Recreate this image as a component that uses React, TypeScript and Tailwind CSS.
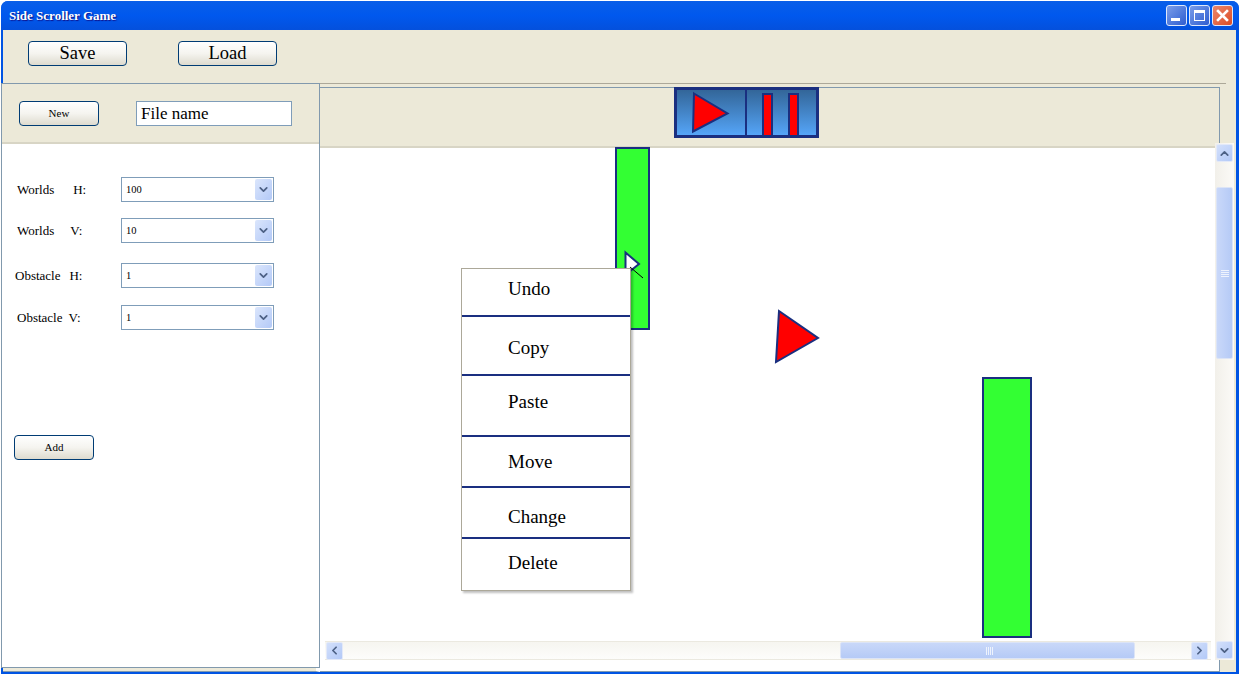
import { ChevronDown, ChevronLeft, ChevronRight, ChevronUp } from "lucide-react";

const serif = "font-['Liberation_Serif',serif]";
const xpButton =
  "flex items-center justify-center rounded-[4px] border border-[#003c74] bg-gradient-to-b from-white via-[#f5f4ef] to-[#dedbcf] text-black";

function WindowButton({ kind }: { kind: "min" | "max" | "close" }) {
  const tone =
    kind === "close"
      ? "from-[#e9876b] to-[#dd4a20]"
      : "from-[#7b9de9] to-[#2f5cd0]";
  return (
    <div
      className={`relative h-[21px] w-[21px] rounded-[3px] border border-[#dfe8fb] bg-gradient-to-br ${tone}`}
    >
      <svg className="absolute inset-0" width="19" height="19" viewBox="0 0 19 19">
        {kind === "min" && <rect x="4" y="12" width="9" height="3" fill="white" />}
        {kind === "max" && (
          <path d="M4 4h11v11H4z M5 7v7h9V7z" fill="white" fillRule="evenodd" />
        )}
        {kind === "close" && (
          <path d="M5 5l9 9M14 5l-9 9" stroke="white" strokeWidth="2.6" strokeLinecap="square" />
        )}
      </svg>
    </div>
  );
}

function ScrollArrow({ children }: { children: React.ReactNode }) {
  return (
    <div className="flex h-[18px] w-[17px] shrink-0 items-center justify-center rounded-[2px] border border-[#e3e9f8] bg-gradient-to-br from-[#d3e0fb] to-[#b3c9f7] text-[#4d6185]">
      {children}
    </div>
  );
}

function SelectRow({
  label,
  axis,
  axisGap,
  labelLeft,
  value,
}: {
  label: string;
  axis: string;
  axisGap: string;
  labelLeft: string;
  value: string;
}) {
  return (
    <div className="flex h-[25px] items-center">
      <div className={`flex w-[119px] shrink-0 text-[13px] leading-none text-black ${labelLeft}`}>
        <span>{label}</span>
        <span className={axisGap}>{axis}</span>
      </div>
      <div className="flex h-[25px] w-[153px] items-center justify-between border border-[#7f9db9] bg-white pl-[4px] pr-[1px] text-[10.5px]">
        <span>{value}</span>
        <div className="flex h-[21px] w-[17px] items-center justify-center rounded-[2px] bg-gradient-to-br from-[#dbe6fc] to-[#b3c9f7] text-[#4d6185]">
          <ChevronDown size={13} strokeWidth={3.2} />
        </div>
      </div>
    </div>
  );
}

const menuItems = [
  { label: "Undo", height: "h-[48px]", text: "pb-[5px]" },
  { label: "Copy", height: "h-[59px]", text: "pt-[6px]" },
  { label: "Paste", height: "h-[61px]", text: "pb-[7px]" },
  { label: "Move", height: "h-[51px]", text: "pt-[1px]" },
  { label: "Change", height: "h-[51px]", text: "pt-[10px]" },
  { label: "Delete", height: "h-[53px]", text: "pb-[4px]" },
];

export default function App() {
  return (
    <div className={`h-[675px] w-[1240px] overflow-hidden bg-white ${serif}`}>
      <div className="ml-[1px] mt-[1px] flex h-[673px] w-[1238px] flex-col rounded-t-[7px] bg-[#0054e3] pb-[2px] pl-[2px] pr-[3px]">
        <div className="-ml-[2px] -mr-[3px] flex h-[29px] shrink-0 items-center justify-between rounded-t-[7px] bg-gradient-to-b from-[#0a5ee8] via-[#0058ee] to-[#0450dc] pl-[8px] pr-[6px]">
          <span className="text-[13px] font-bold text-white [text-shadow:1px_1px_1px_#0f1089]">
            Side Scroller Game
          </span>
          <div className="flex gap-[2px]">
            <WindowButton kind="min" />
            <WindowButton kind="max" />
            <WindowButton kind="close" />
          </div>
        </div>

        <div className="relative flex h-[54px] shrink-0 items-start bg-[#ece9d8] pl-[25px] pt-[11px] text-[18.5px]">
          <button className={`${xpButton} h-[25px] w-[99px]`}>Save</button>
          <button className={`${xpButton} ml-[51px] h-[25px] w-[99px]`}>Load</button>
          <div className="absolute bottom-0 left-0 h-[1px] w-[1223px] bg-[#aca899]" />
        </div>

        <div className="flex min-h-0 flex-1">
          <div className="z-10 -ml-[2px] -mt-[1px] flex w-[319px] shrink-0 flex-col">
            <div className="flex flex-1 flex-col border border-[#8199ad] bg-white">
              <div className="flex h-[60px] shrink-0 items-start border-b-2 border-[#d8d5c5] bg-[#ece9d8] pl-[17px] pt-[17px]">
                <button className={`${xpButton} h-[25px] w-[80px] text-[11px]`}>New</button>
                <div className="ml-[37px] flex h-[25px] w-[156px] items-center border border-[#7f9db9] bg-white pl-[4px] text-[17px]">
                  File name
                </div>
              </div>
              <div className="flex flex-col pt-[33px]">
                <SelectRow label="Worlds" axis="H:" axisGap="ml-[19px]" labelLeft="pl-[15px]" value="100" />
                <div className="mt-[16px]">
                  <SelectRow label="Worlds" axis="V:" axisGap="ml-[16px]" labelLeft="pl-[15px]" value="10" />
                </div>
                <div className="mt-[20px]">
                  <SelectRow label="Obstacle" axis="H:" axisGap="ml-[9px]" labelLeft="pl-[13px]" value="1" />
                </div>
                <div className="mt-[17px]">
                  <SelectRow label="Obstacle" axis="V:" axisGap="ml-[6px]" labelLeft="pl-[15px]" value="1" />
                </div>
                <button className={`${xpButton} ml-[12px] mt-[105px] h-[25px] w-[80px] text-[11px]`}>Add</button>
              </div>
            </div>
            <div className="ml-[2px] h-[4px] shrink-0 border-b border-r-[4px] border-[#8199ad] border-r-white bg-[#ece9d8]" />
          </div>

          <div className="relative min-w-0 flex-1 bg-[#ece9d8] pr-[16px] pt-[3px]">
            <div className="flex h-full flex-col border-b border-r border-t border-[#8199ad] bg-white">
              <div className="h-[60px] shrink-0 border-b-2 border-[#d8d5c5] bg-[#ece9d8] pl-[354px]">
                <div className="-mt-[1px] flex h-[51px] w-[145px] border-[3px] border-[#1a2f80] bg-gradient-to-b from-[#336699] to-[#55a5f8]">
                  <div className="flex w-[70px] items-center border-r-[2px] border-[#1a2f80] pl-[15px]">
                    <svg width="40" height="45" viewBox="0 0 40 45">
                      <polygon points="2,3.5 35.5,23.5 1,41.5" fill="#ff0000" stroke="#1a2f80" strokeWidth="2" />
                    </svg>
                  </div>
                  <div className="flex flex-1 items-end gap-[15px] pl-[15px]">
                    <div className="h-[42px] w-[11px] border-[2px] border-b-0 border-[#1a2f80] bg-[#ff0000]" />
                    <div className="h-[42px] w-[11px] border-[2px] border-b-0 border-[#1a2f80] bg-[#ff0000]" />
                  </div>
                </div>
              </div>

              <div className="relative flex-1">
                <div className="absolute -top-[1px] left-[295px] h-[183px] w-[35px] border-2 border-[#1a2f80] bg-[#33ff33]" />
                <div className="absolute left-[662px] top-[229px] h-[261px] w-[50px] border-2 border-[#1a2f80] bg-[#33ff33]" />
                <svg className="absolute left-[450px] top-[156px]" width="56" height="64" viewBox="0 0 56 64">
                  <polygon points="9,7 48,34 6,58" fill="#ff0000" stroke="#1a2f80" strokeWidth="2" />
                </svg>
                <svg className="absolute left-[300px] top-[100px]" width="30" height="35" viewBox="0 0 30 35">
                  <polygon points="5.5,4.5 19,16 9,24 5.5,24" fill="white" stroke="#1a2f80" strokeWidth="2" />
                  <line x1="10" y1="19" x2="23" y2="30" stroke="#000" strokeWidth="1" />
                </svg>

                <div className="absolute left-[141px] top-[120px] flex h-[323px] w-[170px] flex-col border border-[#aca899] bg-white text-[19px] shadow-[2px_2px_2px_rgba(0,0,0,0.25)]">
                  {menuItems.map((item, i) => (
                    <div
                      key={item.label}
                      className={`flex shrink-0 items-center pl-[46px] ${item.height} ${item.text} ${
                        i < menuItems.length - 1 ? "border-b-2 border-[#1a2f80]" : ""
                      }`}
                    >
                      {item.label}
                    </div>
                  ))}
                </div>
              </div>

              <div className="mb-[11px] ml-[5px] mr-[8px] flex h-[19px] shrink-0 items-center border-y border-[#ebe9e0] bg-gradient-to-b from-[#f6f5f0] to-[#fdfdfb] pl-[1px]">
                <ScrollArrow>
                  <ChevronLeft size={13} strokeWidth={3.2} />
                </ScrollArrow>
                <div className="ml-[497px] flex h-[17px] w-[295px] items-center justify-center rounded-[2px] border border-[#dce4f6] bg-gradient-to-b from-[#c9d8f9] to-[#b5caf6] pl-[4px]">
                  <div className="flex h-[8px] gap-[1px]">
                    <div className="w-[1px] bg-[#eef3fd]" />
                    <div className="w-[1px] bg-[#eef3fd]" />
                    <div className="w-[1px] bg-[#eef3fd]" />
                    <div className="w-[1px] bg-[#eef3fd]" />
                  </div>
                </div>
                <div className="ml-[56px]">
                  <ScrollArrow>
                    <ChevronRight size={13} strokeWidth={3.2} />
                  </ScrollArrow>
                </div>
              </div>
            </div>

            <div className="absolute left-[895px] top-[59px] flex h-[517px] w-[19px] flex-col items-center bg-gradient-to-r from-[#f2f0ea] to-[#fbfaf7] pt-[1px]">
              <ScrollArrow>
                <ChevronUp size={13} strokeWidth={3.2} />
              </ScrollArrow>
              <div className="mt-[25px] flex h-[172px] w-[17px] flex-col items-center justify-center gap-[1px] rounded-[2px] border border-[#dce4f6] bg-gradient-to-r from-[#c9d8f9] to-[#b5caf6]">
                <div className="h-[1px] w-[8px] bg-[#eef3fd]" />
                <div className="h-[1px] w-[8px] bg-[#eef3fd]" />
                <div className="h-[1px] w-[8px] bg-[#eef3fd]" />
                <div className="h-[1px] w-[8px] bg-[#eef3fd]" />
              </div>
              <div className="mt-[282px]">
                <ScrollArrow>
                  <ChevronDown size={13} strokeWidth={3.2} />
                </ScrollArrow>
              </div>
            </div>
          </div>
        </div>
      </div>
    </div>
  );
}
